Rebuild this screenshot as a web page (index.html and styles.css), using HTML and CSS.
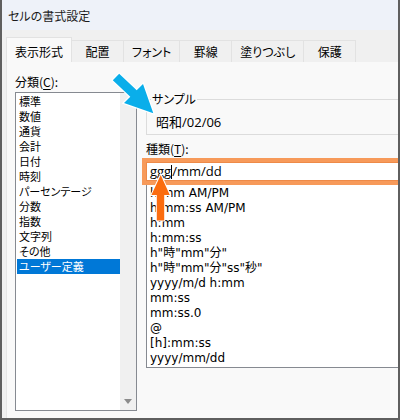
FILE: index.html
```html
<!DOCTYPE html>
<html lang="ja">
<head>
<meta charset="utf-8">
<title>セルの書式設定</title>
<link rel="stylesheet" href="styles.css">
</head>
<body>
<div class="stage">
  <div class="window">
    <div class="titlebar">セルの書式設定</div>
    <div class="tabstrip">
      <div class="tab active">表示形式</div>
      <div class="tab">配置</div>
      <div class="tab">フォント</div>
      <div class="tab">罫線</div>
      <div class="tab">塗りつぶし</div>
      <div class="tab">保護</div>
    </div>
    <div class="panel">
      <div class="col-left">
        <div class="label">分類(<u>C</u>):</div>
        <div class="catlist">
          <ul class="items">
            <li>標準</li>
            <li>数値</li>
            <li>通貨</li>
            <li>会計</li>
            <li>日付</li>
            <li>時刻</li>
            <li>パーセンテージ</li>
            <li>分数</li>
            <li>指数</li>
            <li>文字列</li>
            <li>その他</li>
            <li class="selected">ユーザー定義</li>
          </ul>
          <div class="scrollbar"><span class="down"></span></div>
        </div>
      </div>
      <div class="col-right">
        <fieldset class="sample">
          <legend>サンプル</legend>
          <div class="sample-text">昭和/02/06</div>
        </fieldset>
        <div class="label type-label">種類(<u>T</u>):</div>
        <div class="input">ggg<span class="caret"></span>/mm/dd</div>
        <ul class="fmtlist">
          <li>h:mm AM/PM</li>
          <li>h:mm:ss AM/PM</li>
          <li>h:mm</li>
          <li>h:mm:ss</li>
          <li>h"時"mm"分"</li>
          <li>h"時"mm"分"ss"秒"</li>
          <li>yyyy/m/d h:mm</li>
          <li>mm:ss</li>
          <li>mm:ss.0</li>
          <li>@</li>
          <li>[h]:mm:ss</li>
          <li>yyyy/mm/dd</li>
        </ul>
      </div>
    </div>
  </div>
  <svg class="annot" width="400" height="420" viewBox="0 0 400 420">
    <polygon class="arrow-blue" points="119.2,73.8 136.7,90.3 143,84 153.3,113.3 124,103 130.3,96.7 112.8,80.2"/>
    <polygon class="arrow-orange" points="160.7,175 169.8,195 164.2,195 164.2,220.5 156.8,220.5 156.8,195 151.4,195"/>
  </svg>
</div>
</body>
</html>
```
FILE: styles.css
```css
body {
  margin: 0;
}

.stage {
  position: relative;
  width: 400px;
  height: 420px;
  overflow: hidden;
}

.window {
  width: 400px;
  height: 420px;
  box-sizing: border-box;
  border: 2px solid #5f5f5f;
  border-top: none;
  background: #f0f0f0;
  display: flex;
  flex-direction: column;
  overflow: hidden;
  font-family: "Noto Sans CJK JP", sans-serif;
  font-feature-settings: "palt";
  font-size: 12px;
  color: #000;
}

.titlebar {
  height: 30px;
  flex: none;
  background: #eef2f9;
  display: flex;
  align-items: center;
  padding-left: 6px;
  color: #1b1b1b;
}

.tabstrip {
  height: 32px;
  flex: none;
  display: flex;
  align-items: flex-end;
  padding-left: 4px;
}

.tab {
  height: 22px;
  box-sizing: border-box;
  min-width: 53px;
  padding: 0 8px;
  display: flex;
  align-items: center;
  justify-content: center;
  border: 1px solid #e2e2e2;
  border-bottom: none;
  margin-left: -1px;
  background: #f0f0f0;
}

.tab:first-child {
  margin-left: 0;
}

.tab.active {
  height: 25px;
  padding-top: 3px;
  background: #f9f9f9;
  position: relative;
  z-index: 1;
}

.panel {
  flex: 1;
  margin-left: 4px;
  background: #f9f9f9;
  border-left: 1px solid #e6e6e6;
  display: flex;
  padding-top: 12px;
  overflow: hidden;
}

.col-left {
  flex: none;
  width: 122px;
  margin-left: 8px;
}

.label {
  height: 16px;
  line-height: 16px;
}

.label u {
  text-underline-offset: 2px;
}

.catlist {
  margin-top: 2px;
  height: 319px;
  box-sizing: border-box;
  border: 1px solid #868a91;
  background: #fff;
  display: flex;
}

.items {
  flex: 1;
  list-style: none;
  margin: 0;
  padding: 1px 0 0 1px;
  font-size: 11px;
  line-height: 15px;
}

.items li {
  height: 15px;
  padding-left: 2px;
}

.items li.selected {
  background: #0078d7;
  color: #fff;
}

.scrollbar {
  width: 16px;
  flex: none;
  background: #f0f0f0;
  position: relative;
}

.down {
  position: absolute;
  left: 4px;
  bottom: 6px;
  width: 0;
  height: 0;
  border-left: 4px solid transparent;
  border-right: 4px solid transparent;
  border-top: 5px solid #8b8b8b;
}

.col-right {
  flex: none;
  width: 262px;
  margin-left: 9px;
}

.sample {
  margin: 18px 0 0 0;
  border: 1px solid #dcdcdc;
  border-right: none;
  padding: 8px 0 4px 9px;
  min-inline-size: 0;
}

.sample legend {
  padding: 0 1px;
  margin-left: -5px;
  line-height: 14px;
}

.sample-text {
  font-family: "Open Sans", "Noto Sans CJK JP", sans-serif;
  font-size: 13px;
  line-height: 16px;
}

.type-label {
  margin-top: 6px;
}

.input {
  margin-top: 5px;
  height: 19px;
  box-sizing: border-box;
  border: 1px solid #ee8a48;
  outline: 4px solid #f79a5a;
  background: #fff;
  padding-left: 3px;
  font-family: "Open Sans", "Noto Sans CJK JP", sans-serif;
  font-size: 13px;
  line-height: 17px;
}

.caret {
  display: inline-block;
  width: 1px;
  height: 14px;
  background: #000;
  vertical-align: -3px;
}

.fmtlist {
  list-style: none;
  margin: 1px 0 0 0;
  height: 186px;
  box-sizing: border-box;
  border: 1px solid #868a91;
  background: #fff;
  padding: 3px 0 0 3px;
  font-family: "DejaVu Sans", "Noto Sans CJK JP", sans-serif;
  font-size: 12px;
  line-height: 15px;
  white-space: nowrap;
}

.annot {
  position: absolute;
  left: 0;
  top: 0;
  pointer-events: none;
}

.arrow-blue {
  fill: #0aaeea;
  stroke: #fff;
  stroke-width: 2.5;
  stroke-linejoin: miter;
  paint-order: stroke;
}

.arrow-orange {
  fill: #fb6c0e;
  stroke: #fff;
  stroke-width: 2;
  paint-order: stroke;
}
```
